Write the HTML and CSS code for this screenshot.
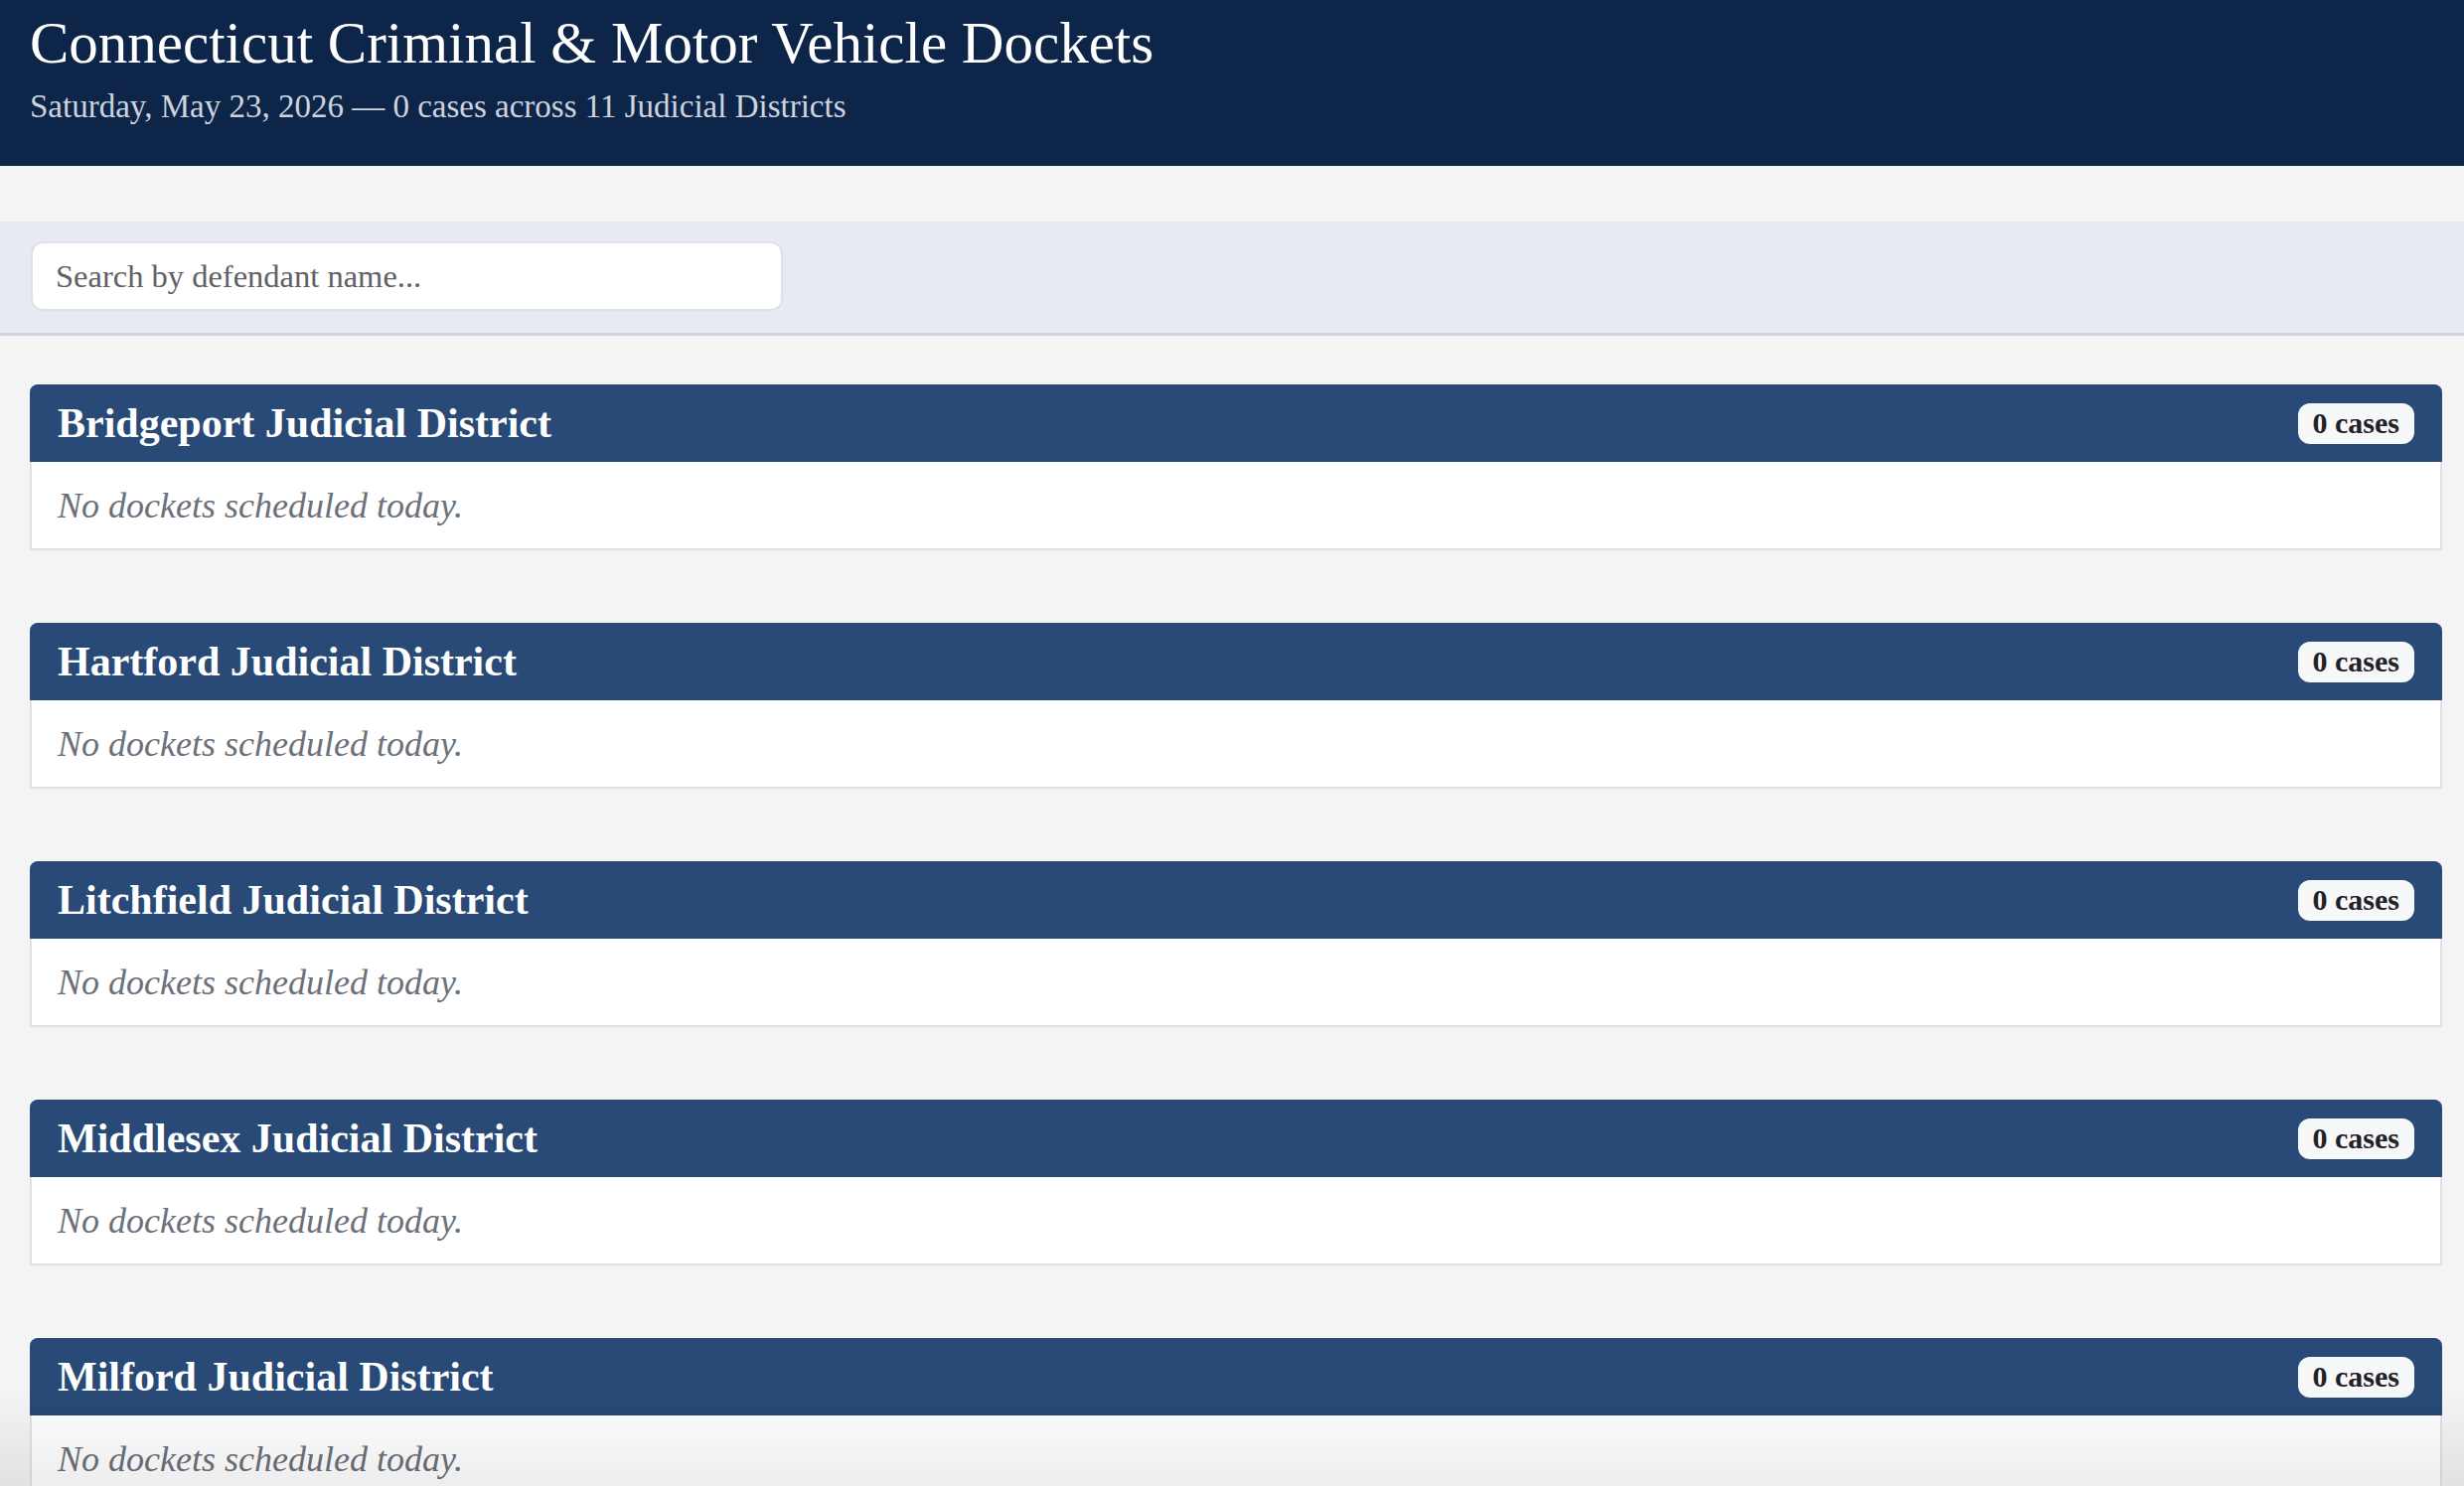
FILE: index.html
```html
<!DOCTYPE html>
<html lang="en">
<head>
<meta charset="utf-8">
<title>Connecticut Criminal &amp; Motor Vehicle Dockets</title>
<link rel="stylesheet" href="styles.css">
</head>
<body>
<header class="site-header">
  <h1 class="site-title">Connecticut Criminal &amp; Motor Vehicle Dockets</h1>
  <p class="site-sub">Saturday, May 23, 2026 — 0 cases across 11 Judicial Districts</p>
</header>
<div class="spacer"></div>
<div class="search-bar">
  <input class="search-input" type="text" placeholder="Search by defendant name...">
</div>
<main class="districts">
  <section class="district">
    <div class="district-head"><h2 class="district-name">Bridgeport Judicial District</h2><span class="badge">0 cases</span></div>
    <div class="district-body"><p class="empty">No dockets scheduled today.</p></div>
  </section>
  <section class="district">
    <div class="district-head"><h2 class="district-name">Hartford Judicial District</h2><span class="badge">0 cases</span></div>
    <div class="district-body"><p class="empty">No dockets scheduled today.</p></div>
  </section>
  <section class="district">
    <div class="district-head"><h2 class="district-name">Litchfield Judicial District</h2><span class="badge">0 cases</span></div>
    <div class="district-body"><p class="empty">No dockets scheduled today.</p></div>
  </section>
  <section class="district">
    <div class="district-head"><h2 class="district-name">Middlesex Judicial District</h2><span class="badge">0 cases</span></div>
    <div class="district-body"><p class="empty">No dockets scheduled today.</p></div>
  </section>
  <section class="district">
    <div class="district-head"><h2 class="district-name">Milford Judicial District</h2><span class="badge">0 cases</span></div>
    <div class="district-body"><p class="empty">No dockets scheduled today.</p></div>
  </section>
</main>
<div class="bottom-fade"></div>
</body>
</html>
```
FILE: styles.css
```css
* { box-sizing: border-box; }
html, body {
  margin: 0;
  padding: 0;
  background: #f4f4f4;
  font-family: "Liberation Serif", "Times New Roman", serif;
  color: #222;
}
.site-header {
  background: #0d2549;
  height: 167px;
  padding: 11px 30px 0 30px;
  display: flex;
  flex-direction: column;
}
.site-title {
  margin: 0;
  font-size: 59px;
  line-height: 64px;
  font-weight: 400;
  color: #ffffff;
  white-space: nowrap;
}
.site-sub {
  margin: 12px 0 0 0;
  font-size: 33px;
  line-height: 40px;
  color: #cdd4df;
  white-space: nowrap;
}
.spacer { height: 56px; }
.search-bar {
  background: #e7eaf2;
  padding: 20px 30px 22px 31px;
  border-bottom: 3px solid #cbd4df;
}
.search-input {
  display: block;
  width: 757px;
  height: 70px;
  border: 2px solid #dee1e7;
  border-radius: 12px;
  background: #fff;
  padding: 0 23px;
  font-family: "Liberation Serif", "Times New Roman", serif;
  font-size: 32.5px;
  color: #333;
  outline: none;
}
.search-input::placeholder { color: #5e6166; }
.districts {
  padding: 49px 22px 0 30px;
}
.district {
  margin-bottom: 73px;
}
.district-head {
  background: #294a76;
  height: 78px;
  border-radius: 8px 8px 0 0;
  padding: 0 28px 0 28px;
  display: flex;
  align-items: center;
  justify-content: space-between;
}
.district-name {
  margin: 0;
  font-size: 42px;
  line-height: 46px;
  font-weight: 700;
  color: #ffffff;
}
.badge {
  display: inline-flex;
  align-items: center;
  justify-content: center;
  height: 41px;
  padding: 0 15px;
  border-radius: 12px;
  background: #f7f8fa;
  color: #1f2226;
  font-size: 30px;
  font-weight: 700;
  line-height: 1;
}
.district-body {
  background: #fff;
  border: 2px solid #e1e1e7;
  border-top: none;
  height: 89px;
  padding: 0 26px;
  display: flex;
  align-items: center;
}
.empty {
  margin: 0;
  font-size: 36px;
  font-style: italic;
  color: #6b717b;
}
.bottom-fade {
  position: fixed;
  left: 0;
  right: 0;
  bottom: 0;
  height: 100px;
  pointer-events: none;
  background: linear-gradient(to bottom, rgba(0,0,0,0), rgba(0,0,0,0.07));
}
```
